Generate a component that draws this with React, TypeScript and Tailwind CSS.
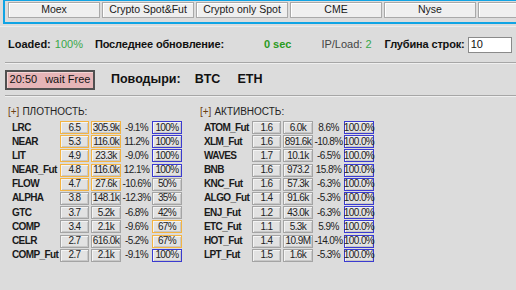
import React from "react";

type Row = { name: string; a: string; b: string; pct: string; c: string; ab: "o" | "g"; cb: "b" | "g" | "o" };

const density: Row[] = [
  { name: "LRC", a: "6.5", b: "305.9k", pct: "-9.1%", c: "100%", ab: "o", cb: "b" },
  { name: "NEAR", a: "5.3", b: "116.0k", pct: "11.2%", c: "100%", ab: "o", cb: "b" },
  { name: "LIT", a: "4.9", b: "23.3k", pct: "-9.0%", c: "100%", ab: "o", cb: "b" },
  { name: "NEAR_Fut", a: "4.8", b: "116.0k", pct: "12.1%", c: "100%", ab: "o", cb: "b" },
  { name: "FLOW", a: "4.7", b: "27.6k", pct: "-10.6%", c: "50%", ab: "o", cb: "g" },
  { name: "ALPHA", a: "3.8", b: "148.1k", pct: "-12.3%", c: "35%", ab: "g", cb: "g" },
  { name: "GTC", a: "3.7", b: "5.2k", pct: "-6.8%", c: "42%", ab: "g", cb: "g" },
  { name: "COMP", a: "3.4", b: "2.1k", pct: "-9.6%", c: "67%", ab: "g", cb: "o" },
  { name: "CELR", a: "2.7", b: "616.0k", pct: "-5.2%", c: "67%", ab: "g", cb: "o" },
  { name: "COMP_Fut", a: "2.7", b: "2.1k", pct: "-9.1%", c: "100%", ab: "g", cb: "b" },
];

const activity: Row[] = [
  { name: "ATOM_Fut", a: "1.6", b: "6.0k", pct: "8.6%", c: "100.0%", ab: "g", cb: "b" },
  { name: "XLM_Fut", a: "1.6", b: "891.6k", pct: "-10.8%", c: "100.0%", ab: "g", cb: "b" },
  { name: "WAVES", a: "1.7", b: "10.1k", pct: "-6.5%", c: "100.0%", ab: "g", cb: "b" },
  { name: "BNB", a: "1.6", b: "973.2", pct: "15.8%", c: "100.0%", ab: "g", cb: "b" },
  { name: "KNC_Fut", a: "1.6", b: "57.3k", pct: "-6.3%", c: "100.0%", ab: "g", cb: "b" },
  { name: "ALGO_Fut", a: "1.4", b: "91.6k", pct: "-5.3%", c: "100.0%", ab: "g", cb: "b" },
  { name: "ENJ_Fut", a: "1.2", b: "43.0k", pct: "-6.3%", c: "100.0%", ab: "g", cb: "b" },
  { name: "ETC_Fut", a: "1.1", b: "5.3k", pct: "5.9%", c: "100.0%", ab: "g", cb: "b" },
  { name: "HOT_Fut", a: "1.4", b: "10.9M", pct: "-14.0%", c: "100.0%", ab: "g", cb: "b" },
  { name: "LPT_Fut", a: "1.5", b: "1.6k", pct: "-5.3%", c: "100.0%", ab: "g", cb: "b" },
];

const border = {
  o: "border-[#f3b443]",
  g: "border-[#a4a4a4]",
  b: "border-[#3b3bd0]",
};

function Cell({ v, b, w }: { v: string; b: "o" | "g" | "b"; w: string }) {
  return (
    <div
      className={`${w} h-[13px] shrink-0 border ${border[b]} bg-[#e2e2e2] shadow-[inset_1px_1px_0_#f4f4f4,inset_-1px_-1px_0_#c8c8c8] flex items-center justify-center text-[10px] tracking-[-0.6px] leading-none text-[#222] whitespace-nowrap`}
    >
      {v}
    </div>
  );
}

function Table({ title, rows }: { title: string; rows: Row[] }) {
  return (
    <div className="flex flex-col shrink-0">
      <div className="h-[17px] flex items-center text-[10px] text-[#222] whitespace-nowrap">
        <span className="text-[#6b3f10]">[+]</span>
        <span className="ml-[3px]">{title}</span>
      </div>
      <div className="flex flex-col gap-[1.2px] mt-[1px] pl-[4px]">
        {rows.map((r) => (
          <div key={r.name} className="flex items-center h-[13px]">
            <div className="w-[48px] shrink-0 font-bold text-[10px] tracking-[-0.6px] text-[#1a1a1a] leading-none whitespace-nowrap">
              {r.name}
            </div>
            <Cell v={r.a} b={r.ab} w="w-[29px]" />
            <div className="w-[2px] shrink-0" />
            <Cell v={r.b} b={r.ab} w="w-[30px]" />
            <div className="w-[31px] shrink-0 text-center text-[10px] tracking-[-0.6px] text-[#222] leading-none whitespace-nowrap">
              {r.pct}
            </div>
            <Cell v={r.c} b={r.cb} w="w-[30px]" />
          </div>
        ))}
      </div>
    </div>
  );
}

const tabs = ["Moex", "Crypto Spot&Fut", "Crypto only Spot", "CME", "Nyse", ""];

export default function App() {
  return (
    <div
      className="w-[516px] h-[290px] overflow-hidden bg-[#dcdcdc] relative"
      style={{ fontFamily: '"Liberation Sans", Arial, sans-serif' }}
    >
      {/* tab bar */}
      <div className="ml-[3px] -mt-[1px] w-[600px] h-[25px] border-2 border-[#10a4e4] flex gap-[2px] pl-[3px] pt-[1px]">
        {tabs.map((t, i) => (
          <div
            key={i}
            className="w-[92px] h-[16px] shrink-0 bg-[#efefef] border border-[#a9a9a9] shadow-[inset_1px_1px_0_#ffffff] flex items-center justify-center text-[10.5px] text-[#1a1a1a] whitespace-nowrap"
          >
            {t}
          </div>
        ))}
      </div>
      <div className="h-[3px] border-b border-[#ececec]" />

      {/* status row */}
      <div className="h-[35px] flex items-center text-[11px] text-[#111] pl-[8px] whitespace-nowrap">
        <span className="font-bold">Loaded:</span>
        <span className="ml-[4px] text-[#39a84a]">100%</span>
        <span className="font-bold ml-[12px] tracking-[-0.15px]">Последнее обновление:</span>
        <span className="font-bold ml-[40px] text-[#2a9a22]">0 sec</span>
        <span className="ml-[30px] text-[#444]">
          IP/Load: <span className="text-[#39a84a]">2</span>
        </span>
        <span className="font-bold ml-[13px] tracking-[-0.15px]">Глубина строк:</span>
        <div className="ml-[3px] w-[44px] h-[16px] shrink-0 bg-white border border-[#8a8a8a] text-[11px] flex items-center pl-[2px]">
          10
        </div>
      </div>
      <div className="ml-[5px] border-t border-[#a6a6a6] border-b border-b-[#efefef]" />

      {/* leaders row */}
      <div className="h-[31px] flex items-center pl-[5px] whitespace-nowrap">
        <div className="w-[90px] h-[20px] shrink-0 bg-[#e6b5b7] border-2 border-[#505050] shadow-[inset_1px_1px_0_#f4d4d5] flex items-center justify-center text-[11px] text-[#111] gap-[8px]">
          <span>20:50</span>
          <span>wait Free</span>
        </div>
        <span className="ml-[16px] font-bold text-[12.5px] text-[#111]">Поводыри:</span>
        <span className="ml-[14px] font-bold text-[12.5px] text-[#111]">BTC</span>
        <span className="ml-[17px] font-bold text-[12.5px] text-[#111]">ETH</span>
      </div>
      <div className="ml-[5px] border-t border-[#a6a6a6] border-b border-b-[#efefef]" />

      {/* tables */}
      <div className="flex pl-[8px] pt-[6px]">
        <Table title="ПЛОТНОСТЬ:" rows={density} />
        <div className="w-[18px] shrink-0" />
        <Table title="АКТИВНОСТЬ:" rows={activity} />
      </div>
    </div>
  );
}
